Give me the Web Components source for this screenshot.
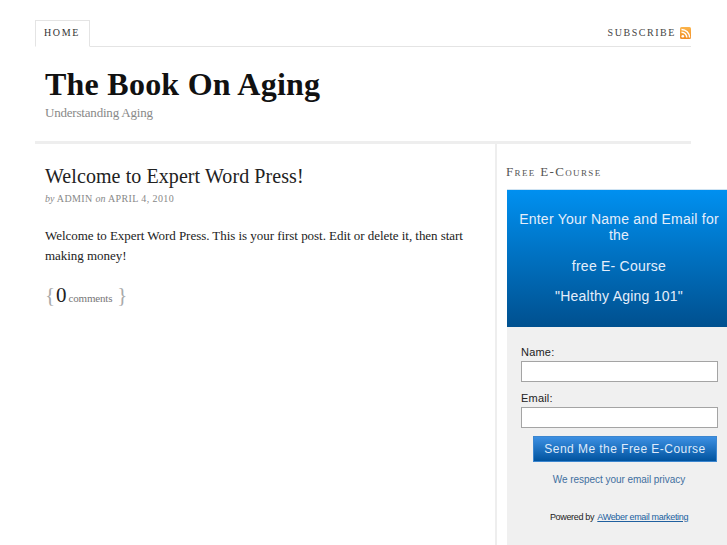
<!DOCTYPE html>
<html lang="en"><head><meta charset="utf-8"><title>The Book On Aging</title>
<style>
html,body{margin:0;padding:0;height:545px;overflow:hidden;background:#fff;font-family:"Liberation Serif",serif;color:#222}
</style></head><body>
<site-page>
  <site-nav></site-nav>
  <site-header></site-header>
  <div slot="main"><blog-post></blog-post></div>
  <div slot="side"><course-widget></course-widget></div>
</site-page>
<script>
function def(name,html){customElements.define(name,class extends HTMLElement{constructor(){super();this.attachShadow({mode:'open'}).innerHTML=html}})}
def('site-page',`<style>
:host{display:block;width:656px;margin-left:35px;padding-top:20px}
.cols{display:flex;align-items:stretch;height:401px}
.main{width:460px;flex:none;border-right:2px solid #eeeeee}
.side{flex:none;width:230px;padding-left:9px}
</style><slot></slot><div class="cols"><div class="main"><slot name="main"></slot></div><div class="side"><slot name="side"></slot></div></div>`);
def('site-nav',`<style>
:host{display:flex;justify-content:space-between;height:26px;border-bottom:1px solid #e4e4e4;box-sizing:content-box}
.tab{box-sizing:border-box;width:55px;height:27px;border:1px solid #e4e4e4;border-bottom:1px solid #fff;background:#fff;font-size:10px;letter-spacing:1.65px;line-height:24px;padding-left:8px;color:#333}
.sub{display:flex;align-items:center;gap:4px;font-size:10px;letter-spacing:1.55px;color:#444;height:24px}
svg{display:block;margin-top:1px}
</style><div class="tab">HOME</div><div class="sub"><span>SUBSCRIBE</span><svg width="11" height="12" viewBox="0 0 11 12"><defs><linearGradient id="g" x1="0" y1="0" x2="0" y2="1"><stop offset="0" stop-color="#fbb44a"/><stop offset="1" stop-color="#f08c24"/></linearGradient></defs><rect width="11" height="12" rx="1.5" fill="url(#g)"/><circle cx="2.8" cy="9.2" r="1.3" fill="#fff"/><path d="M1.5 5.2a5.3 5.3 0 0 1 5.3 5.3M1.5 2.4a8.1 8.1 0 0 1 8.1 8.1" fill="none" stroke="#fff" stroke-width="1.5"/></svg></div>`);
def('site-header',`<style>
:host{display:block;height:94px;border-bottom:3px solid #eeeeee;padding-left:10px}
h1{margin:0;padding-top:18px;font-size:32px;line-height:38px;font-weight:bold;color:#111;letter-spacing:.24px}
p{margin:0;padding-top:1px;font-size:13px;line-height:18px;letter-spacing:-.2px;color:#888}
</style><h1>The Book On Aging</h1><p>Understanding Aging</p>`);
def('blog-post',`<style>
:host{display:block;padding:19px 10px 0}
h2{margin:0;font-size:20px;line-height:26px;font-weight:normal;color:#222;letter-spacing:.08px}
.meta{font-size:10px;line-height:14px;margin-top:3px;letter-spacing:.4px;color:#888}
.meta i{letter-spacing:0}
p{margin:20px 0 0;font-size:13px;line-height:20px;color:#222;letter-spacing:-.04px;width:430px}
.c{margin-top:15px;display:flex;align-items:baseline;color:#aaa;font-size:21px;line-height:28px}
.c b{font-weight:normal;color:#222;margin:0 2px 0 1px}
.c span{font-size:11px;letter-spacing:-.2px;color:#777;margin-right:5px}
</style><h2>Welcome to Expert Word Press!</h2>
<div class="meta"><i>by</i> ADMIN <i>on</i> APRIL 4, 2010</div>
<p>Welcome to Expert Word Press. This is your first post. Edit or delete it, then start making money!</p>
<div class="c">{<b>0</b><span>comments</span>}</div>`);
def('course-widget',`<style>
:host{display:block;font-family:"Liberation Sans",sans-serif}
h3{margin:0;padding-top:21px;font:normal 13px/14px "Liberation Serif",serif;letter-spacing:1.35px;color:#555;font-variant:small-caps;height:24px}
.box{width:224px;margin-left:1px}
.head{box-sizing:border-box;height:138px;background:linear-gradient(#0090f0,#00508f);color:#e4eefb;text-align:center;font-size:14px;line-height:16px;letter-spacing:.23px;padding:21px 2px 0;border-top:1px solid #cfe3f2}
.head p{margin:0 0 15px}
.head p:nth-child(2){margin-bottom:14px}
.form{background:#f0f0f0;height:218px;padding:18px 0 0 14px;box-sizing:border-box;color:#222;font-size:11px}
label{display:block;line-height:14px;letter-spacing:.2px}
.in{box-sizing:border-box;width:197px;height:21px;background:#fff;border:1px solid #a4a4a4;margin:2px 0 9px}
.btn{box-sizing:border-box;width:184px;height:26px;margin:-1px 0 0 12px;background:linear-gradient(#3c8fe2,#00539f);border:1px solid #3c86cf;color:#dfeafa;font-size:12px;line-height:24px;letter-spacing:.45px;text-align:center}
.pr{margin-top:11px;text-align:center;color:#3f6f9f;font-size:10px;line-height:14px;padding-right:14px;letter-spacing:-.05px}
.pw{margin-top:23px;text-align:center;font-size:9px;line-height:14px;color:#222;padding-right:14px;letter-spacing:-.33px}
a{color:#20609f;text-decoration:underline;margin-left:1px}
</style><h3>Free E-Course</h3>
<div class="box"><div class="head"><p>Enter Your Name and Email for the</p><p>free E- Course</p><p>"Healthy Aging 101"</p></div>
<div class="form"><label>Name:</label><div class="in"></div><label>Email:</label><div class="in"></div><div class="btn">Send Me the Free E-Course</div><div class="pr">We respect your email privacy</div><div class="pw">Powered by <a>AWeber email marketing</a></div></div></div>`);
</script>
</body></html>
